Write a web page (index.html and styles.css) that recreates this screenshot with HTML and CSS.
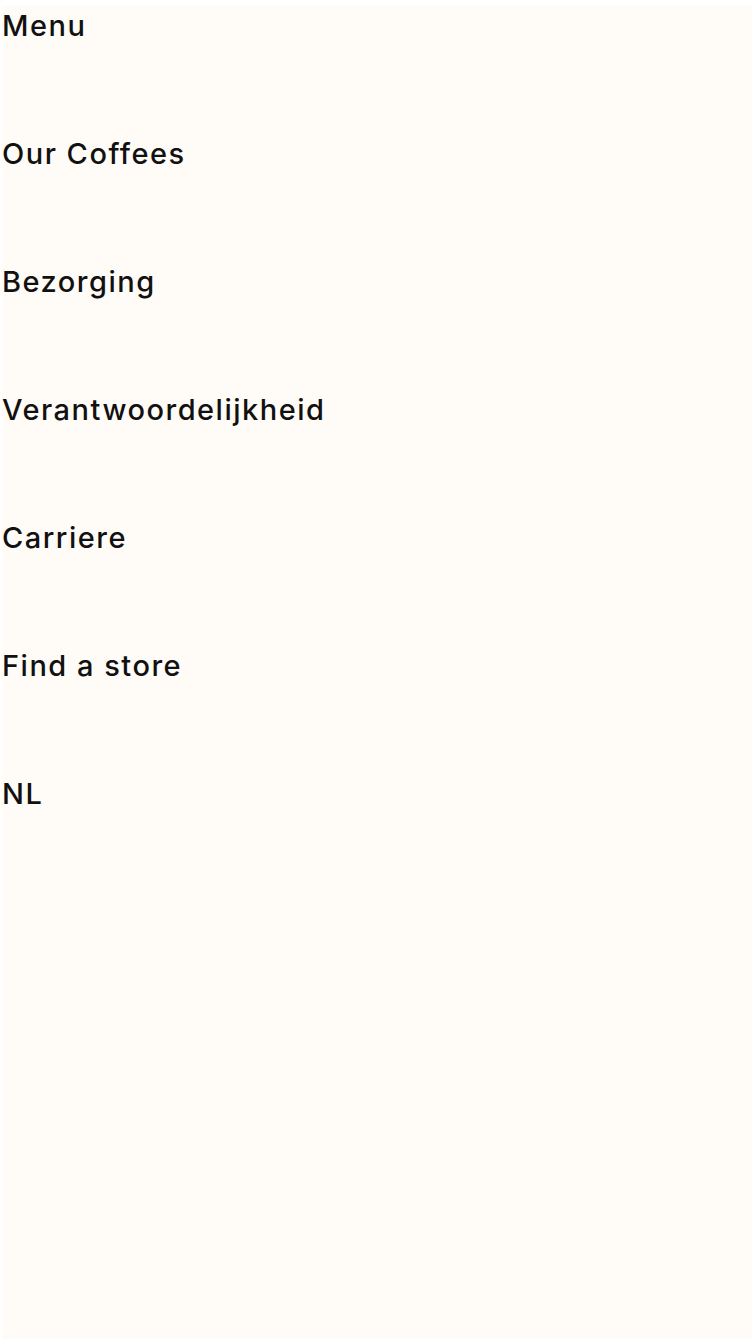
FILE: index.html
```html
<!DOCTYPE html>
<html lang="nl">
<head>
<meta charset="utf-8">
<title>Menu</title>
<link rel="stylesheet" href="styles.css">
</head>
<body>
<nav class="menu">
  <div class="item">Menu</div>
  <div class="item">Our Coffees</div>
  <div class="item">Bezorging</div>
  <div class="item">Verantwoordelijkheid</div>
  <div class="item">Carriere</div>
  <div class="item">Find a store</div>
  <div class="item">NL</div>
</nav>
</body>
</html>
```
FILE: styles.css
```css
html, body {
  margin: 0;
  padding: 0;
  background: #ffffff;
}
.menu {
  margin: 6px 2px 0 2px;
  height: 1333px;
  background: #fffcf7;
  display: flex;
  flex-direction: column;
  font-family: "Inter", sans-serif;
  font-weight: 500;
  color: #111111;
}
.item {
  font-size: 29px;
  line-height: 39px;
  letter-spacing: 1.5px;
  height: 128px;
}
```
